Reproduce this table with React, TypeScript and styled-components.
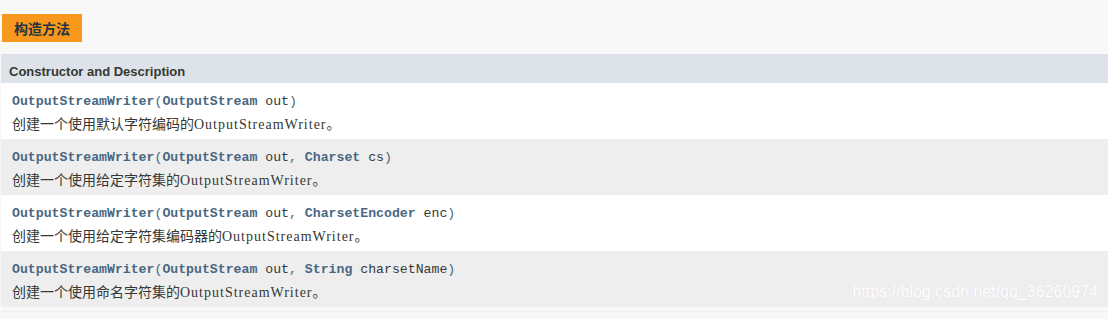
import React from "react";
import styled, { createGlobalStyle } from "styled-components";

const Global = createGlobalStyle`
  html, body { margin: 0; padding: 0; background: #f8f8f8; }
  body { width: 1108px; height: 319px; overflow: hidden; }
`;

const Page = styled.div`
  position: relative;
  padding-top: 14px;
  background: #f8f8f8;
  height: 319px;
  box-sizing: border-box;
`;

const Caption = styled.div`
  display: inline-flex;
  align-items: center;
  height: 28px;
  margin-left: 2px;
  padding: 0 12px;
  background: #f8981d;
  color: #253441;
  font: bold 14px "Liberation Sans", "Noto Sans CJK SC", sans-serif;
`;

const Table = styled.div`
  margin: 12px 0 0 1px;
  border-bottom: 1px solid #eeeeef;
  padding-bottom: 4px;
`;

const Header = styled.div`
  height: 29px;
  display: flex;
  align-items: center;
  padding: 6px 0 0 8px;
  background: #dee3e9;
  color: #353833;
  font: bold 13px "Liberation Sans", Arial, sans-serif;
  box-sizing: border-box;
`;

const Row = styled.div<{ $alt: boolean }>`
  height: 56px;
  box-sizing: border-box;
  padding: 11px 0 0 11px;
  background: ${(p) => (p.$alt ? "#eeeeef" : "#ffffff")};
`;

const Code = styled.div`
  font: 13.2px "Liberation Mono", "Courier New", monospace;
  color: #4a6782;
  line-height: 16px;
  white-space: pre;
`;

const Link = styled.b`
  color: #4a6782;
  font-weight: bold;
`;

const Param = styled.span`
  color: #353833;
`;

const Desc = styled.div`
  margin-top: 6px;
  font: 14px "Liberation Serif", "Noto Sans CJK SC", serif;
  color: #353833;
  line-height: 18px;
`;

const Latin = styled.span`
  letter-spacing: 1px;
`;

const Watermark = styled.div`
  position: absolute;
  right: 10px;
  top: 283px;
  font: 16px "Liberation Sans", Arial, sans-serif;
  color: #ffffff;
  text-shadow: 0 0 1px rgba(0, 0, 0, 0.1);
`;

type P = { type: string; name: string };
const rows: { params: P[]; desc: string }[] = [
  { params: [{ type: "OutputStream", name: "out" }], desc: "创建一个使用默认字符编码的" },
  {
    params: [
      { type: "OutputStream", name: "out" },
      { type: "Charset", name: "cs" },
    ],
    desc: "创建一个使用给定字符集的",
  },
  {
    params: [
      { type: "OutputStream", name: "out" },
      { type: "CharsetEncoder", name: "enc" },
    ],
    desc: "创建一个使用给定字符集编码器的",
  },
  {
    params: [
      { type: "OutputStream", name: "out" },
      { type: "String", name: "charsetName" },
    ],
    desc: "创建一个使用命名字符集的",
  },
];

export default function App() {
  return (
    <>
      <Global />
      <Page>
        <Caption>构造方法</Caption>
        <Table>
          <Header>Constructor and Description</Header>
          {rows.map((r, i) => (
            <Row key={i} $alt={i % 2 === 1}>
              <Code>
                <Link>OutputStreamWriter</Link>(
                {r.params.map((p, j) => (
                  <React.Fragment key={j}>
                    {j > 0 ? ", " : ""}
                    <Link>{p.type}</Link>
                    <Param> {p.name}</Param>
                  </React.Fragment>
                ))}
                )
              </Code>
              <Desc>
                {r.desc}
                <Latin>OutputStreamWriter</Latin>。
              </Desc>
            </Row>
          ))}
        </Table>
        <Watermark>https://blog.csdn.net/qq_36260974</Watermark>
      </Page>
    </>
  );
}
